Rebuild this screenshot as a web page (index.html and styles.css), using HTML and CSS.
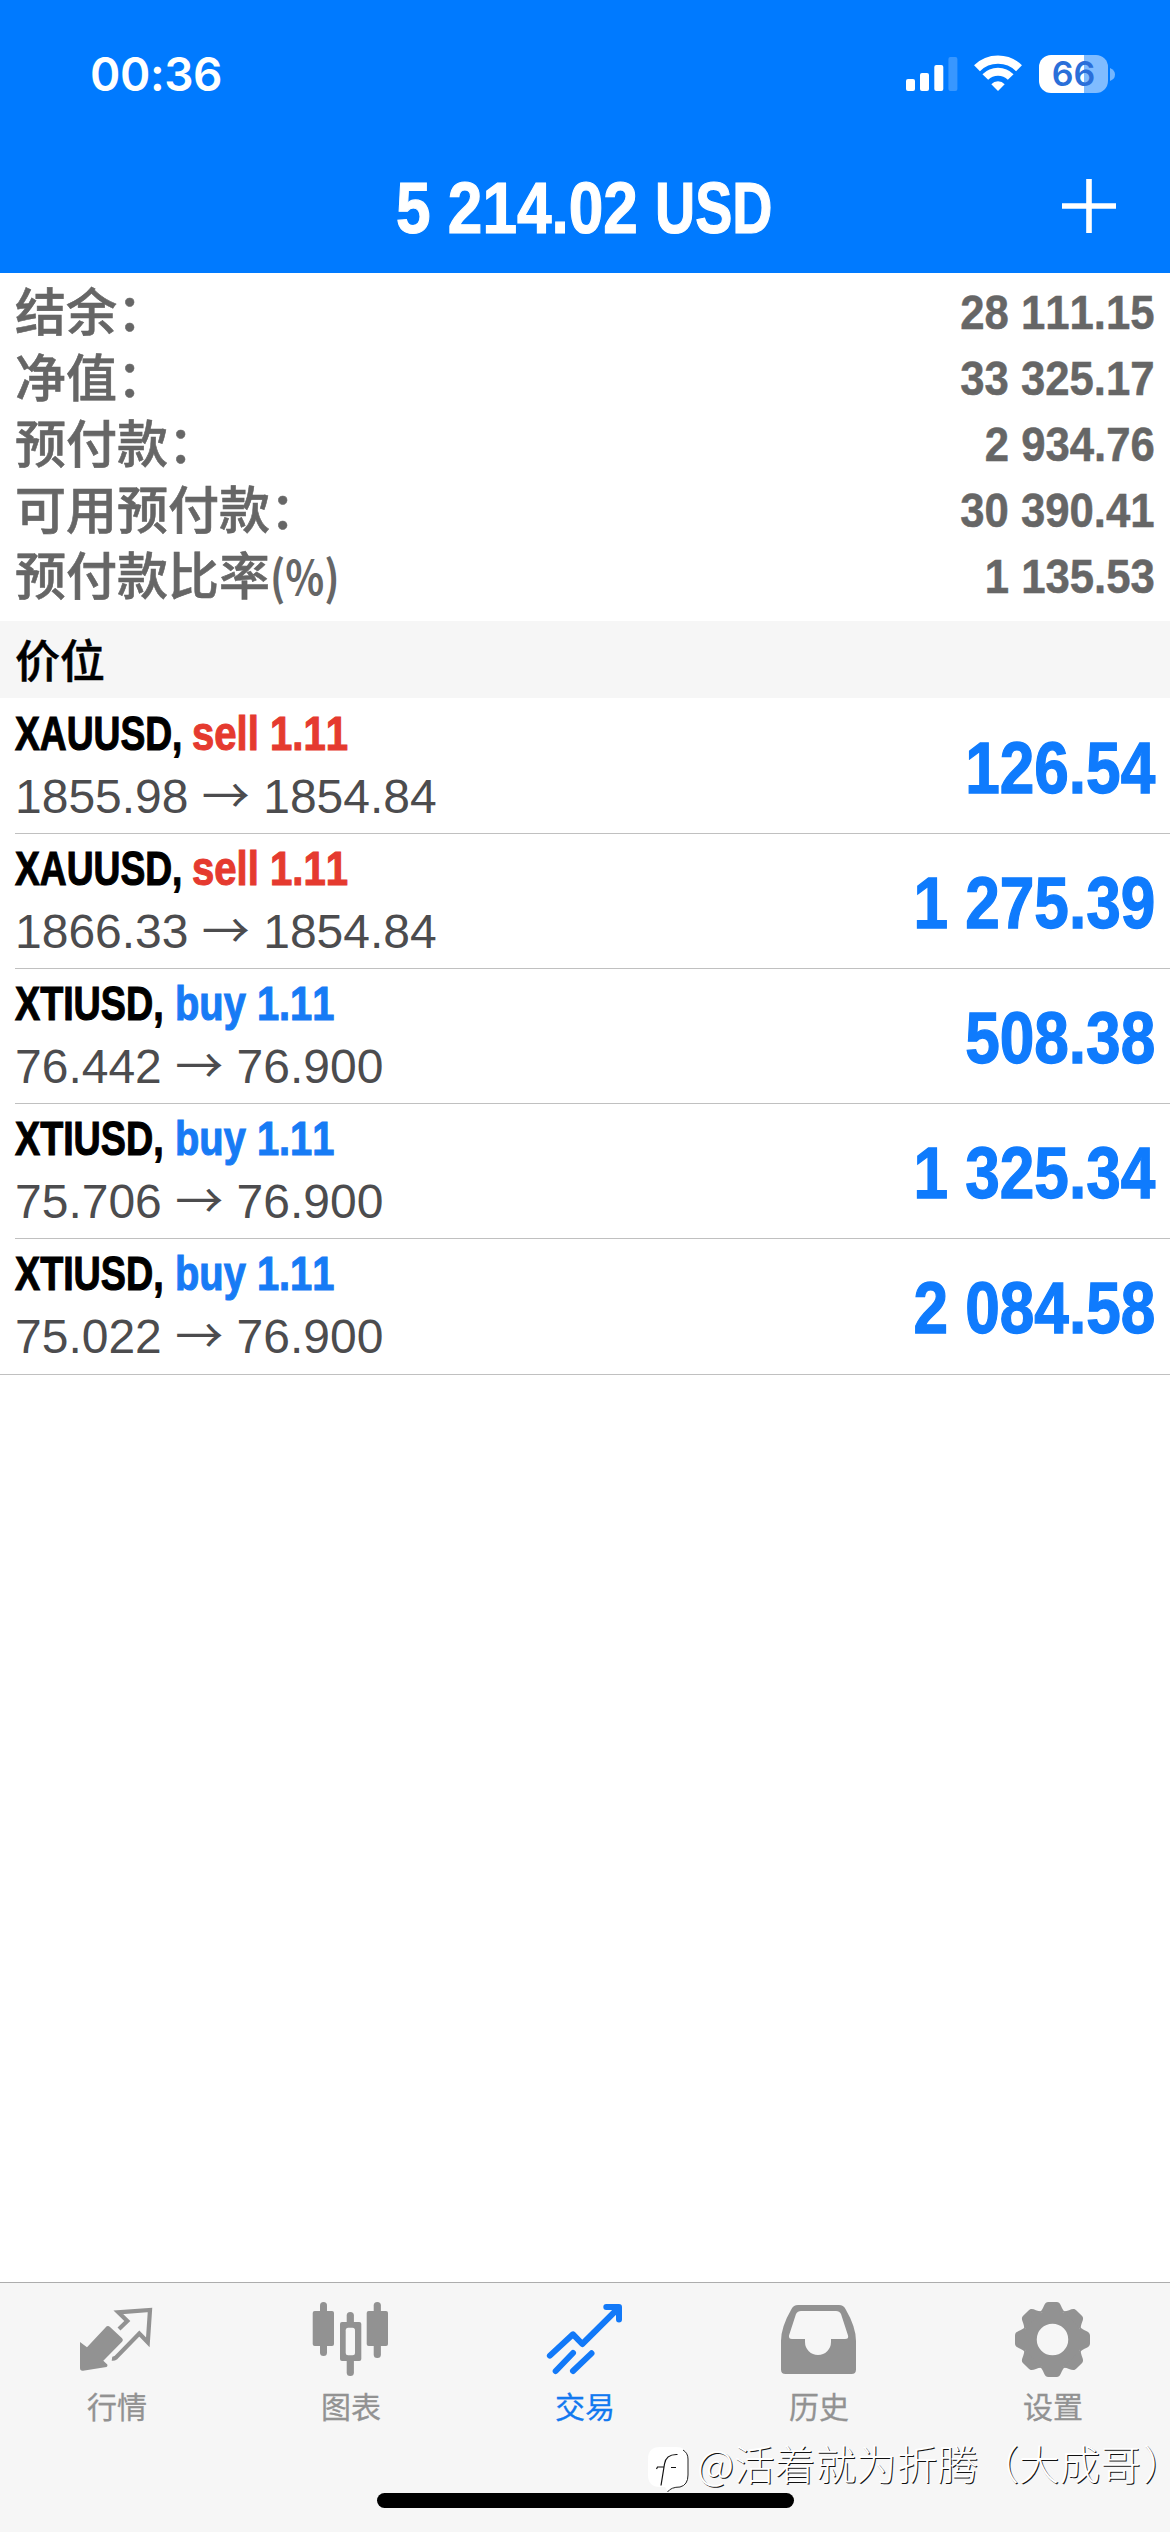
FILE: index.html
```html
<!DOCTYPE html>
<html lang="zh-CN">
<head>
<meta charset="utf-8">
<title>交易</title>
<link rel="stylesheet" href="styles.css">
</head>
<body>
<div class="screen">
  <header class="header">
    <div class="status">
      <span class="time">00:36</span>
      <div class="status-icons">
        <svg class="signal" width="52" height="38" viewBox="0 0 52 38" fill="#fff">
          <rect x="0" y="24" width="9" height="12" rx="2"/>
          <rect x="14" y="18" width="9" height="18" rx="2"/>
          <rect x="28.3" y="10" width="9" height="26" rx="2"/>
          <rect x="42.4" y="2" width="9" height="34" rx="2" opacity=".22"/>
        </svg>
        <svg class="wifi" width="50" height="38" viewBox="0 0 50 38" fill="none" stroke="#fff">
          <path d="M4 13.2A30 30 0 0 1 46 13.2" stroke-width="8.4"/>
          <path d="M12.3 22A17.7 17.7 0 0 1 37.7 22" stroke-width="8"/>
          <path d="M18.3 29.3A9 9 0 0 1 31.7 29.3L25 36Z" fill="#fff" stroke="none"/>
        </svg>
        <div class="battery"><span class="battery-level">66</span></div>
        <svg class="nub" width="5" height="13" viewBox="0 0 5 13"><path d="M0 0Q5 2 5 6.5T0 13Z" fill="#73b6ff"/></svg>
      </div>
    </div>
    <div class="nav">
      <h1 class="total"><span class="total-sum">5 214.02</span><span class="total-currency">USD</span></h1>
      <svg class="plus" width="54" height="54" viewBox="0 0 54 54" stroke="#fff" stroke-width="5.6"><path d="M27 0V54M0 27H54"/></svg>
    </div>
  </header>

  <section class="summary">
    <div class="line"><span class="label">结余：</span><span class="value">28 111.15</span></div>
    <div class="line"><span class="label">净值：</span><span class="value">33 325.17</span></div>
    <div class="line"><span class="label">预付款：</span><span class="value">2 934.76</span></div>
    <div class="line"><span class="label">可用预付款：</span><span class="value">30 390.41</span></div>
    <div class="line"><span class="label">预付款比率<span class="pct">(%)</span></span><span class="value">1 135.53</span></div>
  </section>

  <h2 class="section-title">价位</h2>

  <main class="positions">
    <article class="position">
      <div class="deal">
        <div class="name"><span class="symbol gold">XAUUSD,</span><span class="side sell">sell 1.11</span></div>
        <div class="prices">1855.98 <span class="arrow">→</span> 1854.84</div>
      </div>
      <div class="profit">126.54</div>
    </article>
    <article class="position">
      <div class="deal">
        <div class="name"><span class="symbol gold">XAUUSD,</span><span class="side sell">sell 1.11</span></div>
        <div class="prices">1866.33 <span class="arrow">→</span> 1854.84</div>
      </div>
      <div class="profit">1 275.39</div>
    </article>
    <article class="position">
      <div class="deal">
        <div class="name"><span class="symbol oil">XTIUSD,</span><span class="side buy">buy 1.11</span></div>
        <div class="prices">76.442 <span class="arrow">→</span> 76.900</div>
      </div>
      <div class="profit">508.38</div>
    </article>
    <article class="position">
      <div class="deal">
        <div class="name"><span class="symbol oil">XTIUSD,</span><span class="side buy">buy 1.11</span></div>
        <div class="prices">75.706 <span class="arrow">→</span> 76.900</div>
      </div>
      <div class="profit">1 325.34</div>
    </article>
    <article class="position">
      <div class="deal">
        <div class="name"><span class="symbol oil">XTIUSD,</span><span class="side buy">buy 1.11</span></div>
        <div class="prices">75.022 <span class="arrow">→</span> 76.900</div>
      </div>
      <div class="profit">2 084.58</div>
    </article>
  </main>

  <nav class="tabs">
    <a class="tab">
      <svg width="80" height="80" viewBox="0 0 80 80">
        <path d="M3 42L10 47.3L28.5 27.5Q30.7 25 33 27L44.8 38Q46.8 40 44.8 42L26.3 60.7L30.3 64.6Q31 66.5 29.5 66.9L6 70.7Q3 71 3 68Z" fill="#929292"/>
        <path d="M42 29L50.3 21L41.3 12.3L73 10L70.8 42.3L62.3 33.5L39 57.5Q37 59 35 58.7" fill="none" stroke="#929292" stroke-width="4.2"/>
      </svg>
      <span class="tab-label">行情</span>
    </a>
    <a class="tab">
      <svg width="80" height="80" viewBox="0 0 80 80" fill="#929292">
        <rect x="9" y="2" width="7" height="54" rx="3.5"/><rect x="1.7" y="11" width="21.3" height="35" rx="2"/>
        <rect x="35.7" y="12" width="7.2" height="64" rx="3.5"/><rect x="29" y="22" width="21.3" height="39" rx="2"/>
        <rect x="34.7" y="27.7" width="9.3" height="27.6" rx="2.5" fill="#f6f6f6"/>
        <rect x="62.7" y="2" width="7.2" height="56" rx="3.5"/><rect x="55.7" y="11" width="21.3" height="35" rx="2"/>
      </svg>
      <span class="tab-label">图表</span>
    </a>
    <a class="tab active">
      <svg width="80" height="80" viewBox="0 0 80 80" fill="none" stroke="#1279f8" stroke-width="6" stroke-linecap="round" stroke-linejoin="round">
        <path d="M4.9 55.6L28 34.3L37.3 44L72 9.5"/>
        <path d="M61.3 7H74V19.6"/>
        <path d="M68 6H75V13Z" fill="#1279f8" stroke="none"/>
        <path d="M10.7 71L28 53M28 71L46.5 53.3"/>
      </svg>
      <span class="tab-label">交易</span>
    </a>
    <a class="tab">
      <svg width="80" height="80" viewBox="0 0 80 80" fill="#929292">
        <path fill-rule="evenodd" d="M19 5H60Q64.5 5 66.5 9Q77 27 77 41V69.5Q77 74 72.5 74H6.5Q2 74 2 69.5V41Q2 27 12.5 9Q14.5 5 19 5ZM22 11Q18.5 11 17 14L10 35.5Q9.5 39 13 39H26V42A13 13 0 0 0 52 42V39H66Q70 39 69 35.5L62 14Q60.5 11 57 11Z"/>
      </svg>
      <span class="tab-label">历史</span>
    </a>
    <a class="tab">
      <svg width="80" height="80" viewBox="-39.5 -39.5 80 80" fill="#929292">
        <defs><path id="tooth" d="M-13-27C-8-31-9-37.5-4-37.5H4C9-37.5 8-31 13-27Z"/></defs>
        <circle r="22.5" fill="none" stroke="#929292" stroke-width="13.5"/>
        <use href="#tooth"/><use href="#tooth" transform="rotate(45)"/><use href="#tooth" transform="rotate(90)"/><use href="#tooth" transform="rotate(135)"/>
        <use href="#tooth" transform="rotate(180)"/><use href="#tooth" transform="rotate(225)"/><use href="#tooth" transform="rotate(270)"/><use href="#tooth" transform="rotate(315)"/>
      </svg>
      <span class="tab-label">设置</span>
    </a>
  </nav>

  <div class="home-indicator"></div>
  <div class="watermark">
    <svg width="52" height="50" viewBox="0 0 52 50">
      <path d="M15 3H31Q43 3 43 15V31Q43 41 35 43Q27 43 23 48L20 43H15Q3 43 3 31V15Q3 3 15 3Z" fill="#fff"/>
      <path d="M38 6Q43 9 43 15V31Q43 41 35 43Q26 43 22.5 48" fill="none" stroke="#222" stroke-width="1"/>
      <path d="M32.5 10.5Q21 10 19.5 20L19 23H12.5L11.5 25M19 23L16 41.500M26 23.5H31" fill="none" stroke="#111" stroke-width="1.2"/>
    </svg>
    <span class="author">@活着就为折腾（大成哥<span class="close">）</span></span>
  </div>
</div>
</body>
</html>
```
FILE: styles.css
```css
* { box-sizing: border-box; }

body {
  margin: 0;
  background: #fff;
  font-family: "Liberation Sans", "Noto Sans CJK SC", sans-serif;
  font-kerning: none;
}

.screen {
  position: relative;
  display: flex;
  flex-direction: column;
  width: 1170px;
  height: 2532px;
  overflow: hidden;
}

/* Header */
.header {
  height: 273px;
  background: #007aff;
  color: #fff;
}

.status {
  display: flex;
  justify-content: space-between;
  align-items: center;
  height: 148px;
  padding: 0 55px 0 90px;
}

.time {
  font: 600 46px/56px Inter, sans-serif;
  letter-spacing: -0.4px;
}

.status-icons { display: flex; align-items: center; }
.wifi { margin-left: 15px; }

.battery {
  width: 69px;
  height: 38px;
  margin-left: 16px;
  border-radius: 12px;
  background: linear-gradient(90deg, #fff 45px, #80bcff 45px);
  text-align: center;
}

.battery-level {
  display: block;
  font: 600 34px/38px Inter, sans-serif;
  color: #2a6fd9;
}

.nub { margin-left: 2px; }

.nav {
  display: grid;
  grid-template-columns: 1fr auto 1fr;
  align-items: center;
  height: 116px;
  padding-right: 54px;
}

.total {
  display: flex;
  grid-column: 2;
  width: 378px;
  margin: 3px -54px 0 0;
  font-size: 72px;
  line-height: 80px;
  white-space: nowrap;
  -webkit-text-stroke: 1.2px;
}

.total-sum {
  width: 259px;
  transform: scaleX(0.863);
  transform-origin: left;
}

.total-currency {
  transform: scaleX(0.772);
  transform-origin: left;
}

.plus { grid-column: 3; justify-self: end; }

/* Account summary */
.summary {
  padding: 7px 15px 11px;
  color: #666;
}

.line {
  display: flex;
  justify-content: space-between;
  height: 66px;
}

.label {
  font: 500 51px/58px "Noto Sans CJK SC", sans-serif;
  -webkit-text-stroke: 0.6px;
}

.pct {
  display: inline-block;
  font-size: 47px;
  font-weight: 700;
  line-height: 1;
  transform: scaleX(0.86);
  transform-origin: left;
  -webkit-text-stroke: 0;
}

.value {
  font-size: 48px;
  font-weight: 700;
  line-height: 66px;
  transform: scaleX(0.91);
  transform-origin: right;
  -webkit-text-stroke: 0.5px;
}

.section-title {
  height: 77px;
  margin: 0;
  padding-left: 15px;
  background: #f6f6f6;
  font: 500 45px/75px "Noto Sans CJK SC", sans-serif;
  -webkit-text-stroke: 0.5px;
}

/* Open positions */
.positions { padding-top: 1px; }

.position {
  display: flex;
  justify-content: space-between;
  height: 135px;
  margin-left: 15px;
  padding-right: 15px;
  border-bottom: 1px solid #c0c0c0;
}

.position:last-child {
  height: 136px;
  margin-left: 0;
  padding-left: 15px;
}

.deal {
  display: flex;
  flex-direction: column;
  gap: 6px;
  padding-top: 7px;
}

.name {
  display: flex;
  height: 56px;
  font-size: 48px;
  font-weight: 700;
  line-height: 56px;
  white-space: nowrap;
  -webkit-text-stroke: 1.1px;
}

.symbol, .side { transform-origin: left; }
.symbol { transform: scaleX(0.775); }
.gold { width: 177px; }
.oil { width: 160px; transform: scaleX(0.785); }
.sell { color: #e53a2f; transform: scaleX(0.835); }
.buy { color: #177bf5; transform: scaleX(0.83); }

.prices {
  height: 56px;
  color: #4c4c4e;
  font-size: 48px;
  line-height: 56px;
}

.arrow { font-family: "Noto Sans CJK SC", sans-serif; line-height: 1; }

.profit {
  color: #0f7bfd;
  font-size: 72px;
  font-weight: 700;
  line-height: 138px;
  transform: scaleX(0.863);
  transform-origin: right;
  -webkit-text-stroke: 1.3px;
}

/* Tab bar */
.tabs {
  display: flex;
  height: 250px;
  margin-top: auto;
  padding-top: 17px;
  border-top: 1px solid #adadad;
  background: #f6f6f6;
}

.tab {
  display: flex;
  flex: 1;
  flex-direction: column;
  align-items: center;
  color: #929292;
}

.tab-label {
  font: 400 30px/51px "Noto Sans CJK SC", sans-serif;
  -webkit-text-stroke: 0.3px;
}

.active { color: #1279f0; }

/* Overlays */
.home-indicator {
  position: absolute;
  left: 377px;
  bottom: 24px;
  width: 417px;
  height: 15px;
  border-radius: 8px;
  background: #000;
}

.watermark {
  position: absolute;
  left: 645px;
  bottom: 38px;
  display: flex;
  align-items: center;
  height: 50px;
}

.author {
  margin-top: -13px;
  color: #fff;
  font: 300 40.7px/50px "Noto Sans CJK SC", sans-serif;
  text-shadow: 1px 1px 0 #111;
  white-space: nowrap;
}

.close {
  margin-left: 2px;
  font-feature-settings: "halt";
}
```
